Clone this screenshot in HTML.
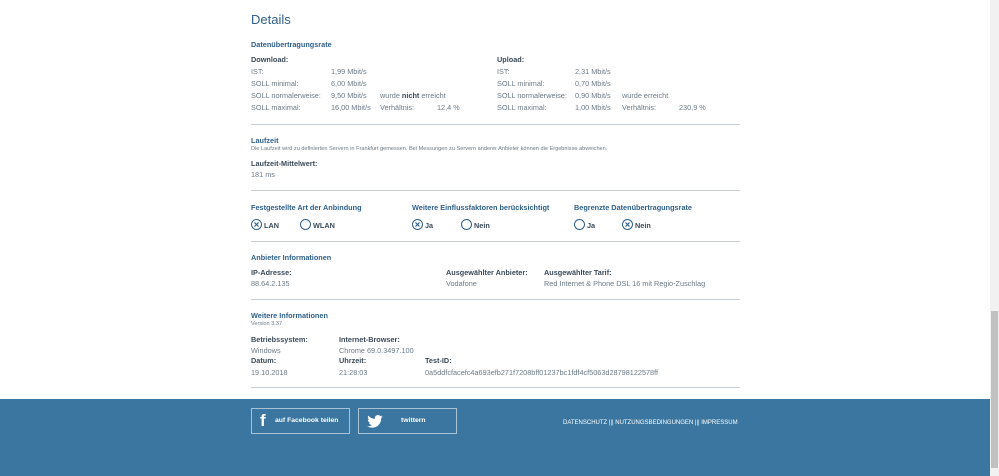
<!DOCTYPE html>
<html><head><meta charset="utf-8"><style>
*{margin:0;padding:0;box-sizing:border-box}
body{width:999px;height:476px;overflow:hidden;background:#fff;font-family:"Liberation Sans",sans-serif;font-size:7.3px;color:#6b7a86;position:relative}
.a{position:absolute;white-space:nowrap}
.h{color:#2e5f8a;font-weight:bold}
.b{color:#3a4a58;font-weight:bold}
.hr{position:absolute;left:251px;width:489px;height:1px;background:#c5ced6}
.r{position:absolute;width:11px;height:11px;border:1.3px solid #2e5f8a;border-radius:50%}
.r.x svg{position:absolute;left:2px;top:2px}
footer{position:absolute;left:0;top:399px;width:990px;height:77px;background:#3a76a0}
.btn{position:absolute;top:9px;height:26px;border:1.5px solid #a8c3d8;color:#fff;font-weight:bold;font-size:6.8px}
</style></head><body>
<div class="a" style="left:251px;top:12px;font-size:13px;color:#2e5f8a">Details</div>
<div class="a h" style="left:251px;top:40px">Datenübertragungsrate</div>
<div class="a b" style="left:251px;top:55px">Download:</div>
<div class="a" style="left:251px;top:67px">IST:</div><div class="a" style="left:331px;top:67px">1,99 Mbit/s</div>
<div class="a" style="left:251px;top:79px">SOLL minimal:</div><div class="a" style="left:331px;top:79px">6,00 Mbit/s</div>
<div class="a" style="left:251px;top:91px">SOLL normalerweise:</div><div class="a" style="left:331px;top:91px">9,50 Mbit/s</div><div class="a" style="left:380px;top:91px">wurde <b style="color:#3a4a58">nicht</b> erreicht</div>
<div class="a" style="left:251px;top:103px">SOLL maximal:</div><div class="a" style="left:331px;top:103px">16,00 Mbit/s</div><div class="a" style="left:380px;top:103px">Verhältnis:</div><div class="a" style="left:437px;top:103px">12,4 %</div>
<div class="a b" style="left:497px;top:55px">Upload:</div>
<div class="a" style="left:497px;top:67px">IST:</div><div class="a" style="left:575px;top:67px">2,31 Mbit/s</div>
<div class="a" style="left:497px;top:79px">SOLL minimal:</div><div class="a" style="left:575px;top:79px">0,70 Mbit/s</div>
<div class="a" style="left:497px;top:91px">SOLL normalerweise:</div><div class="a" style="left:575px;top:91px">0,90 Mbit/s</div><div class="a" style="left:622px;top:91px">wurde erreicht</div>
<div class="a" style="left:497px;top:103px">SOLL maximal:</div><div class="a" style="left:575px;top:103px">1,00 Mbit/s</div><div class="a" style="left:622px;top:103px">Verhältnis:</div><div class="a" style="left:679px;top:103px">230,9 %</div>
<div class="hr" style="top:124px"></div>
<div class="a h" style="left:251px;top:136px">Laufzeit</div>
<div class="a" style="left:251px;top:146px;font-size:5.6px">Die Laufzeit wird zu definierten Servern in Frankfurt gemessen. Bei Messungen zu Servern anderer Anbieter können die Ergebnisse abweichen.</div>
<div class="a b" style="left:251px;top:159px">Laufzeit-Mittelwert:</div>
<div class="a" style="left:251px;top:170px">181 ms</div>
<div class="hr" style="top:190px"></div>
<div class="a h" style="left:251px;top:203px">Festgestellte Art der Anbindung</div>
<div class="a h" style="left:412px;top:203px">Weitere Einflussfaktoren berücksichtigt</div>
<div class="a h" style="left:574px;top:203px">Begrenzte Datenübertragungsrate</div>
<div class="r x" style="left:251px;top:219px"><svg width="5" height="5" viewBox="0 0 5 5"><path d="M0.5 0.5L4.5 4.5M4.5 0.5L0.5 4.5" stroke="#2e5f8a" stroke-width="1.2"/></svg></div><div class="a b" style="left:264px;top:221px">LAN</div>
<div class="r" style="left:300px;top:219px"></div><div class="a b" style="left:313px;top:221px">WLAN</div>
<div class="r x" style="left:412px;top:219px"><svg width="5" height="5" viewBox="0 0 5 5"><path d="M0.5 0.5L4.5 4.5M4.5 0.5L0.5 4.5" stroke="#2e5f8a" stroke-width="1.2"/></svg></div><div class="a b" style="left:425px;top:221px">Ja</div>
<div class="r" style="left:461px;top:219px"></div><div class="a b" style="left:474px;top:221px">Nein</div>
<div class="r" style="left:574px;top:219px"></div><div class="a b" style="left:587px;top:221px">Ja</div>
<div class="r x" style="left:622px;top:219px"><svg width="5" height="5" viewBox="0 0 5 5"><path d="M0.5 0.5L4.5 4.5M4.5 0.5L0.5 4.5" stroke="#2e5f8a" stroke-width="1.2"/></svg></div><div class="a b" style="left:635px;top:221px">Nein</div>
<div class="hr" style="top:241px"></div>
<div class="a h" style="left:251px;top:253px">Anbieter Informationen</div>
<div class="a b" style="left:251px;top:268px">IP-Adresse:</div><div class="a" style="left:251px;top:279px">88.64.2.135</div>
<div class="a b" style="left:446px;top:268px">Ausgewählter Anbieter:</div><div class="a" style="left:446px;top:279px">Vodafone</div>
<div class="a b" style="left:544px;top:268px">Ausgewählter Tarif:</div><div class="a" style="left:544px;top:279px">Red Internet &amp; Phone DSL 16 mit Regio-Zuschlag</div>
<div class="hr" style="top:299px"></div>
<div class="a h" style="left:251px;top:311px">Weitere Informationen</div>
<div class="a" style="left:251px;top:321px;font-size:5.6px">Version 3.37</div>
<div class="a b" style="left:251px;top:335px">Betriebssystem:</div><div class="a" style="left:251px;top:346px">Windows</div>
<div class="a b" style="left:339px;top:335px">Internet-Browser:</div><div class="a" style="left:339px;top:346px">Chrome 69.0.3497.100</div>
<div class="a b" style="left:251px;top:356px">Datum:</div><div class="a" style="left:251px;top:368px">19.10.2018</div>
<div class="a b" style="left:339px;top:356px">Uhrzeit:</div><div class="a" style="left:339px;top:368px">21:28:03</div>
<div class="a b" style="left:425px;top:356px">Test-ID:</div><div class="a" style="left:425px;top:368px">0a5ddfcfacefc4a693efb271f7208bff01237bc1fdf4cf5063d28798122578ff</div>
<div class="hr" style="top:387px"></div>
<footer>
<div class="btn" style="left:251px;width:99px"><span class="a" style="left:8px;top:2px;font-size:17px;font-weight:bold">f</span><span class="a" style="left:23px;top:8px">auf Facebook teilen</span></div>
<div class="btn" style="left:358px;width:99px"><svg class="a" style="left:8px;top:6px" width="16" height="13" viewBox="0 0 24 20"><path fill="#fff" d="M24 2.4a10 10 0 0 1-2.8.8A5 5 0 0 0 23.3.5a10 10 0 0 1-3.1 1.2A4.9 4.9 0 0 0 11.8 6 14 14 0 0 1 1.7.9a4.9 4.9 0 0 0 1.5 6.6 5 5 0 0 1-2.2-.6 4.9 4.9 0 0 0 3.9 4.9 5 5 0 0 1-2.2.1 4.9 4.9 0 0 0 4.6 3.4A9.9 9.9 0 0 1 0 17.3 14 14 0 0 0 7.5 19.5c9 0 14-7.5 14-14v-.6A10 10 0 0 0 24 2.4z"/></svg><span class="a" style="left:42px;top:8px">twittern</span></div>
<div class="a" style="left:563px;top:21px;color:#fff;font-size:6px">DATENSCHUTZ ||| NUTZUNGSBEDINGUNGEN ||| IMPRESSUM</div>
</footer>
<div class="a" style="left:990px;top:0;width:9px;height:476px;background:#f1f1f1"></div>
<div class="a" style="left:991px;top:311px;width:7px;height:157px;background:#c1c1c1"></div>
</body></html>
